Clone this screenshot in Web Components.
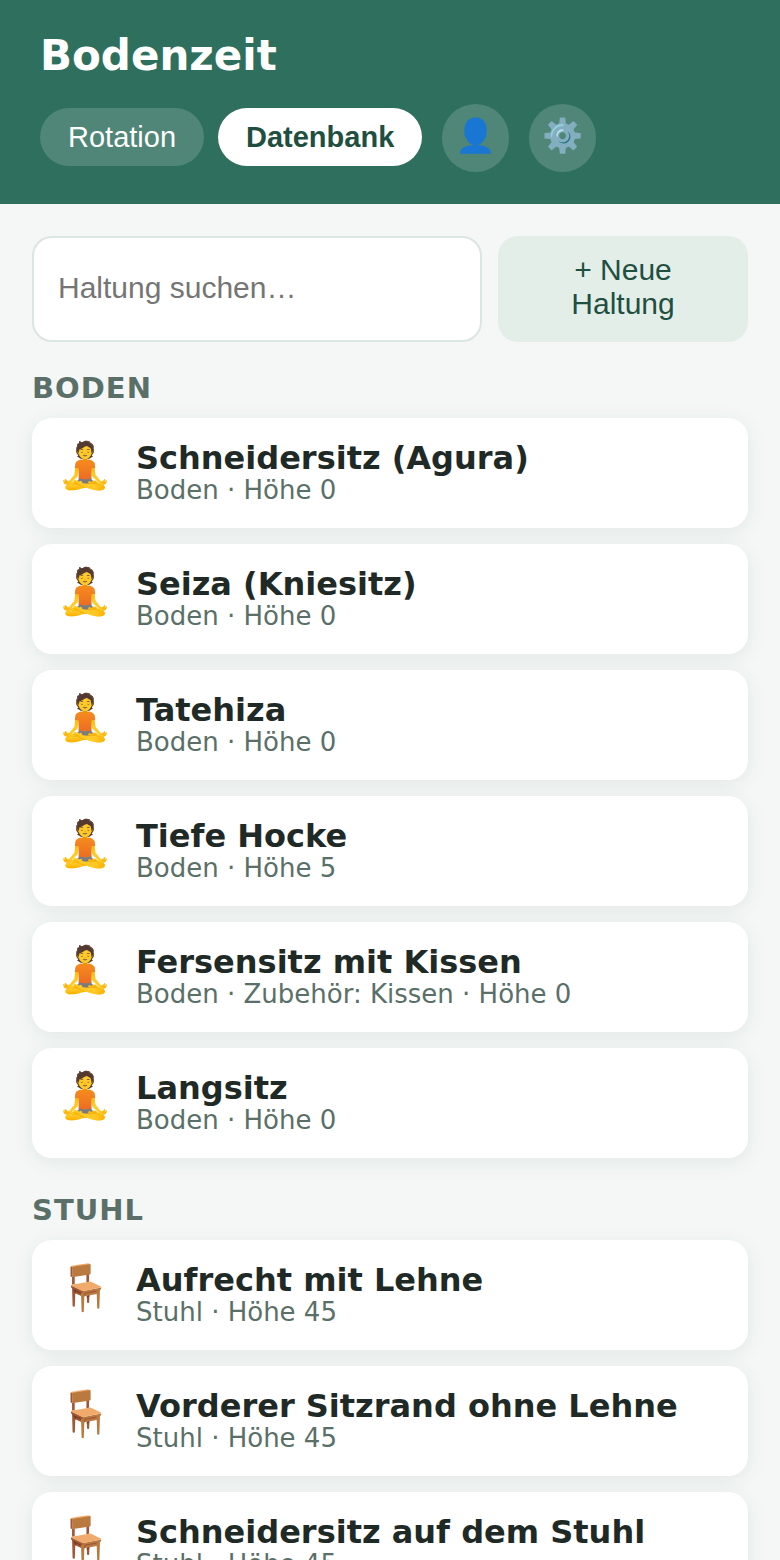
<!DOCTYPE html>
<html lang="de">

<head>
    <meta charset="utf-8">
    <meta name="viewport" content="width=device-width, initial-scale=1">
    <title>Bodenzeit</title>
    <style>
        :root {
            --green: #2f6f5e;
            --green-dark: #1f4f41;
            --green-soft: #e4eee9;
            --ink: #1f2a27;
            --muted: #5b6f69;
            --line: #dbe5e2;
            --ui-font: "Liberation Sans", Arial, sans-serif;
        }

        body {
            margin: 0;
            background: #f4f7f6;
            color: var(--ink);
            font-family: "DejaVu Sans", sans-serif;
        }
    </style>
</head>

<body>
    <bodenzeit-app></bodenzeit-app>

    <script>
        const BODEN = "🧘";
        const STUHL = "🪑";

        const groups = [
            {
                title: "Boden",
                items: [
                    { icon: BODEN, name: "Schneidersitz (Agura)", meta: "Boden · Höhe 0" },
                    { icon: BODEN, name: "Seiza (Kniesitz)", meta: "Boden · Höhe 0" },
                    { icon: BODEN, name: "Tatehiza", meta: "Boden · Höhe 0" },
                    { icon: BODEN, name: "Tiefe Hocke", meta: "Boden · Höhe 5" },
                    { icon: BODEN, name: "Fersensitz mit Kissen", meta: "Boden · Zubehör: Kissen · Höhe 0" },
                    { icon: BODEN, name: "Langsitz", meta: "Boden · Höhe 0" }
                ]
            },
            {
                title: "Stuhl",
                items: [
                    { icon: STUHL, name: "Aufrecht mit Lehne", meta: "Stuhl · Höhe 45" },
                    { icon: STUHL, name: "Vorderer Sitzrand ohne Lehne", meta: "Stuhl · Höhe 45" },
                    { icon: STUHL, name: "Schneidersitz auf dem Stuhl", meta: "Stuhl · Höhe 45" }
                ]
            }
        ];

        function mount(element, html) {
            const template = document.createElement("template");
            template.innerHTML = html;
            element.attachShadow({ mode: "open" }).appendChild(template.content.cloneNode(true));
        }

        // Pill in the header; with the "round" attribute it holds a single emoji
        class NavButton extends HTMLElement {
            constructor() {
                super();
                mount(this, `
                <style>
                    :host { display: block; }
                    button {
                        display: block;
                        margin: 0;
                        padding: 12px 28px;
                        border: 0;
                        border-radius: 40px;
                        background: rgba(255, 255, 255, 0.16);
                        color: #fff;
                        font: 29px/34px var(--ui-font);
                        cursor: pointer;
                    }
                    :host([active]) button {
                        background: #fff;
                        color: var(--green-dark);
                        font-weight: 700;
                    }
                    :host([round]) button {
                        padding: 12px 13px 16px;
                        font-size: 33px;
                        line-height: 40px;
                    }
                </style>
                <button type="button"><slot></slot></button>
                `);
            }

            connectedCallback() {
                const button = this.shadowRoot.querySelector("button");
                if (this.hasAttribute("label")) {
                    button.setAttribute("aria-label", this.getAttribute("label"));
                }
                if (this.hasAttribute("active")) {
                    button.setAttribute("aria-current", "page");
                }
            }
        }

        class AppHeader extends HTMLElement {
            constructor() {
                super();
                mount(this, `
                <style>
                    :host { display: block; }
                    header {
                        padding: 30px 40px 32px;
                        background: var(--green);
                        color: #fff;
                    }
                    h1 {
                        margin: 0 0 22px;
                        font-size: 42px;
                        line-height: 52px;
                    }
                    nav {
                        display: flex;
                        flex-wrap: wrap;
                        align-items: baseline;
                        gap: 14px;
                    }
                    .tools {
                        display: flex;
                        gap: 20px;
                        margin-left: 6px;
                    }
                </style>
                <header>
                    <h1><slot></slot></h1>
                    <nav>
                        <nav-button>Rotation</nav-button>
                        <nav-button active>Datenbank</nav-button>
                        <div class="tools">
                            <nav-button round label="Profil">👤</nav-button>
                            <nav-button round label="Einstellungen">⚙️</nav-button>
                        </div>
                    </nav>
                </header>
                `);
            }
        }

        class SearchBar extends HTMLElement {
            constructor() {
                super();
                mount(this, `
                <style>
                    :host { display: block; }
                    form {
                        display: grid;
                        grid-template-columns: 9fr 5fr;
                        gap: 16px;
                        margin: 0;
                    }
                    input, button {
                        box-sizing: border-box;
                        min-width: 0;
                        width: 100%;
                        margin: 0;
                        border-radius: 20px;
                        font: 30px/34px var(--ui-font);
                    }
                    input {
                        padding: 18px 24px 20px;
                        border: 2px solid var(--line);
                        background: #fff;
                        color: var(--ink);
                    }
                    input::placeholder { color: #757575; }
                    button {
                        padding: 17px 56px 21px;
                        border: 0;
                        background: var(--green-soft);
                        color: var(--green-dark);
                        cursor: pointer;
                    }
                </style>
                <form>
                    <input type="text" aria-label="Haltung suchen" placeholder="Haltung suchen…">
                    <button type="button">+ Neue Haltung</button>
                </form>
                `);
            }
        }

        class PoseCard extends HTMLElement {
            constructor() {
                super();
                mount(this, `
                <style>
                    :host {
                        display: flex;
                        gap: 20px;
                        padding: 23px 28px 23px 25px;
                        border-radius: 20px;
                        background: #fff;
                        box-shadow: 0 4px 20px rgba(31, 79, 65, 0.08);
                    }
                    .icon {
                        flex: none;
                        width: 59px;
                        font-size: 45px;
                        line-height: 50px;
                    }
                    h3 {
                        margin: 0;
                        font-size: 32px;
                        line-height: 34px;
                    }
                    p {
                        margin: 0;
                        color: var(--muted);
                        font-size: 26px;
                        line-height: 30px;
                    }
                </style>
                <div class="icon" aria-hidden="true"><slot name="icon"></slot></div>
                <div>
                    <h3><slot name="name"></slot></h3>
                    <p><slot name="meta"></slot></p>
                </div>
                `);
            }
        }

        class PoseGroup extends HTMLElement {
            constructor() {
                super();
                mount(this, `
                <style>
                    :host { display: block; }
                    h2 {
                        margin: 0 0 13px;
                        color: var(--muted);
                        font-size: 29px;
                        line-height: 34px;
                        letter-spacing: 1px;
                        text-transform: uppercase;
                    }
                    .list {
                        display: grid;
                        gap: 16px;
                    }
                </style>
                <h2><slot name="title"></slot></h2>
                <div class="list"><slot></slot></div>
                `);
            }
        }

        class BodenzeitApp extends HTMLElement {
            constructor() {
                super();
                mount(this, `
                <style>
                    :host { display: block; }
                    main { padding: 32px; }
                    .groups {
                        display: grid;
                        gap: 35px;
                        margin-top: 29px;
                    }
                </style>
                <app-header>Bodenzeit</app-header>
                <main>
                    <search-bar></search-bar>
                    <div class="groups"></div>
                </main>
                `);
            }

            connectedCallback() {
                this.shadowRoot.querySelector(".groups").innerHTML = groups.map((group) => `
                    <pose-group>
                        <span slot="title">${group.title}</span>
                        ${group.items.map((item) => `
                        <pose-card>
                            <span slot="icon">${item.icon}</span>
                            <span slot="name">${item.name}</span>
                            <span slot="meta">${item.meta}</span>
                        </pose-card>`).join("")}
                    </pose-group>`).join("");
            }
        }

        customElements.define("nav-button", NavButton);
        customElements.define("app-header", AppHeader);
        customElements.define("search-bar", SearchBar);
        customElements.define("pose-card", PoseCard);
        customElements.define("pose-group", PoseGroup);
        customElements.define("bodenzeit-app", BodenzeitApp);
    </script>
</body>

</html>
